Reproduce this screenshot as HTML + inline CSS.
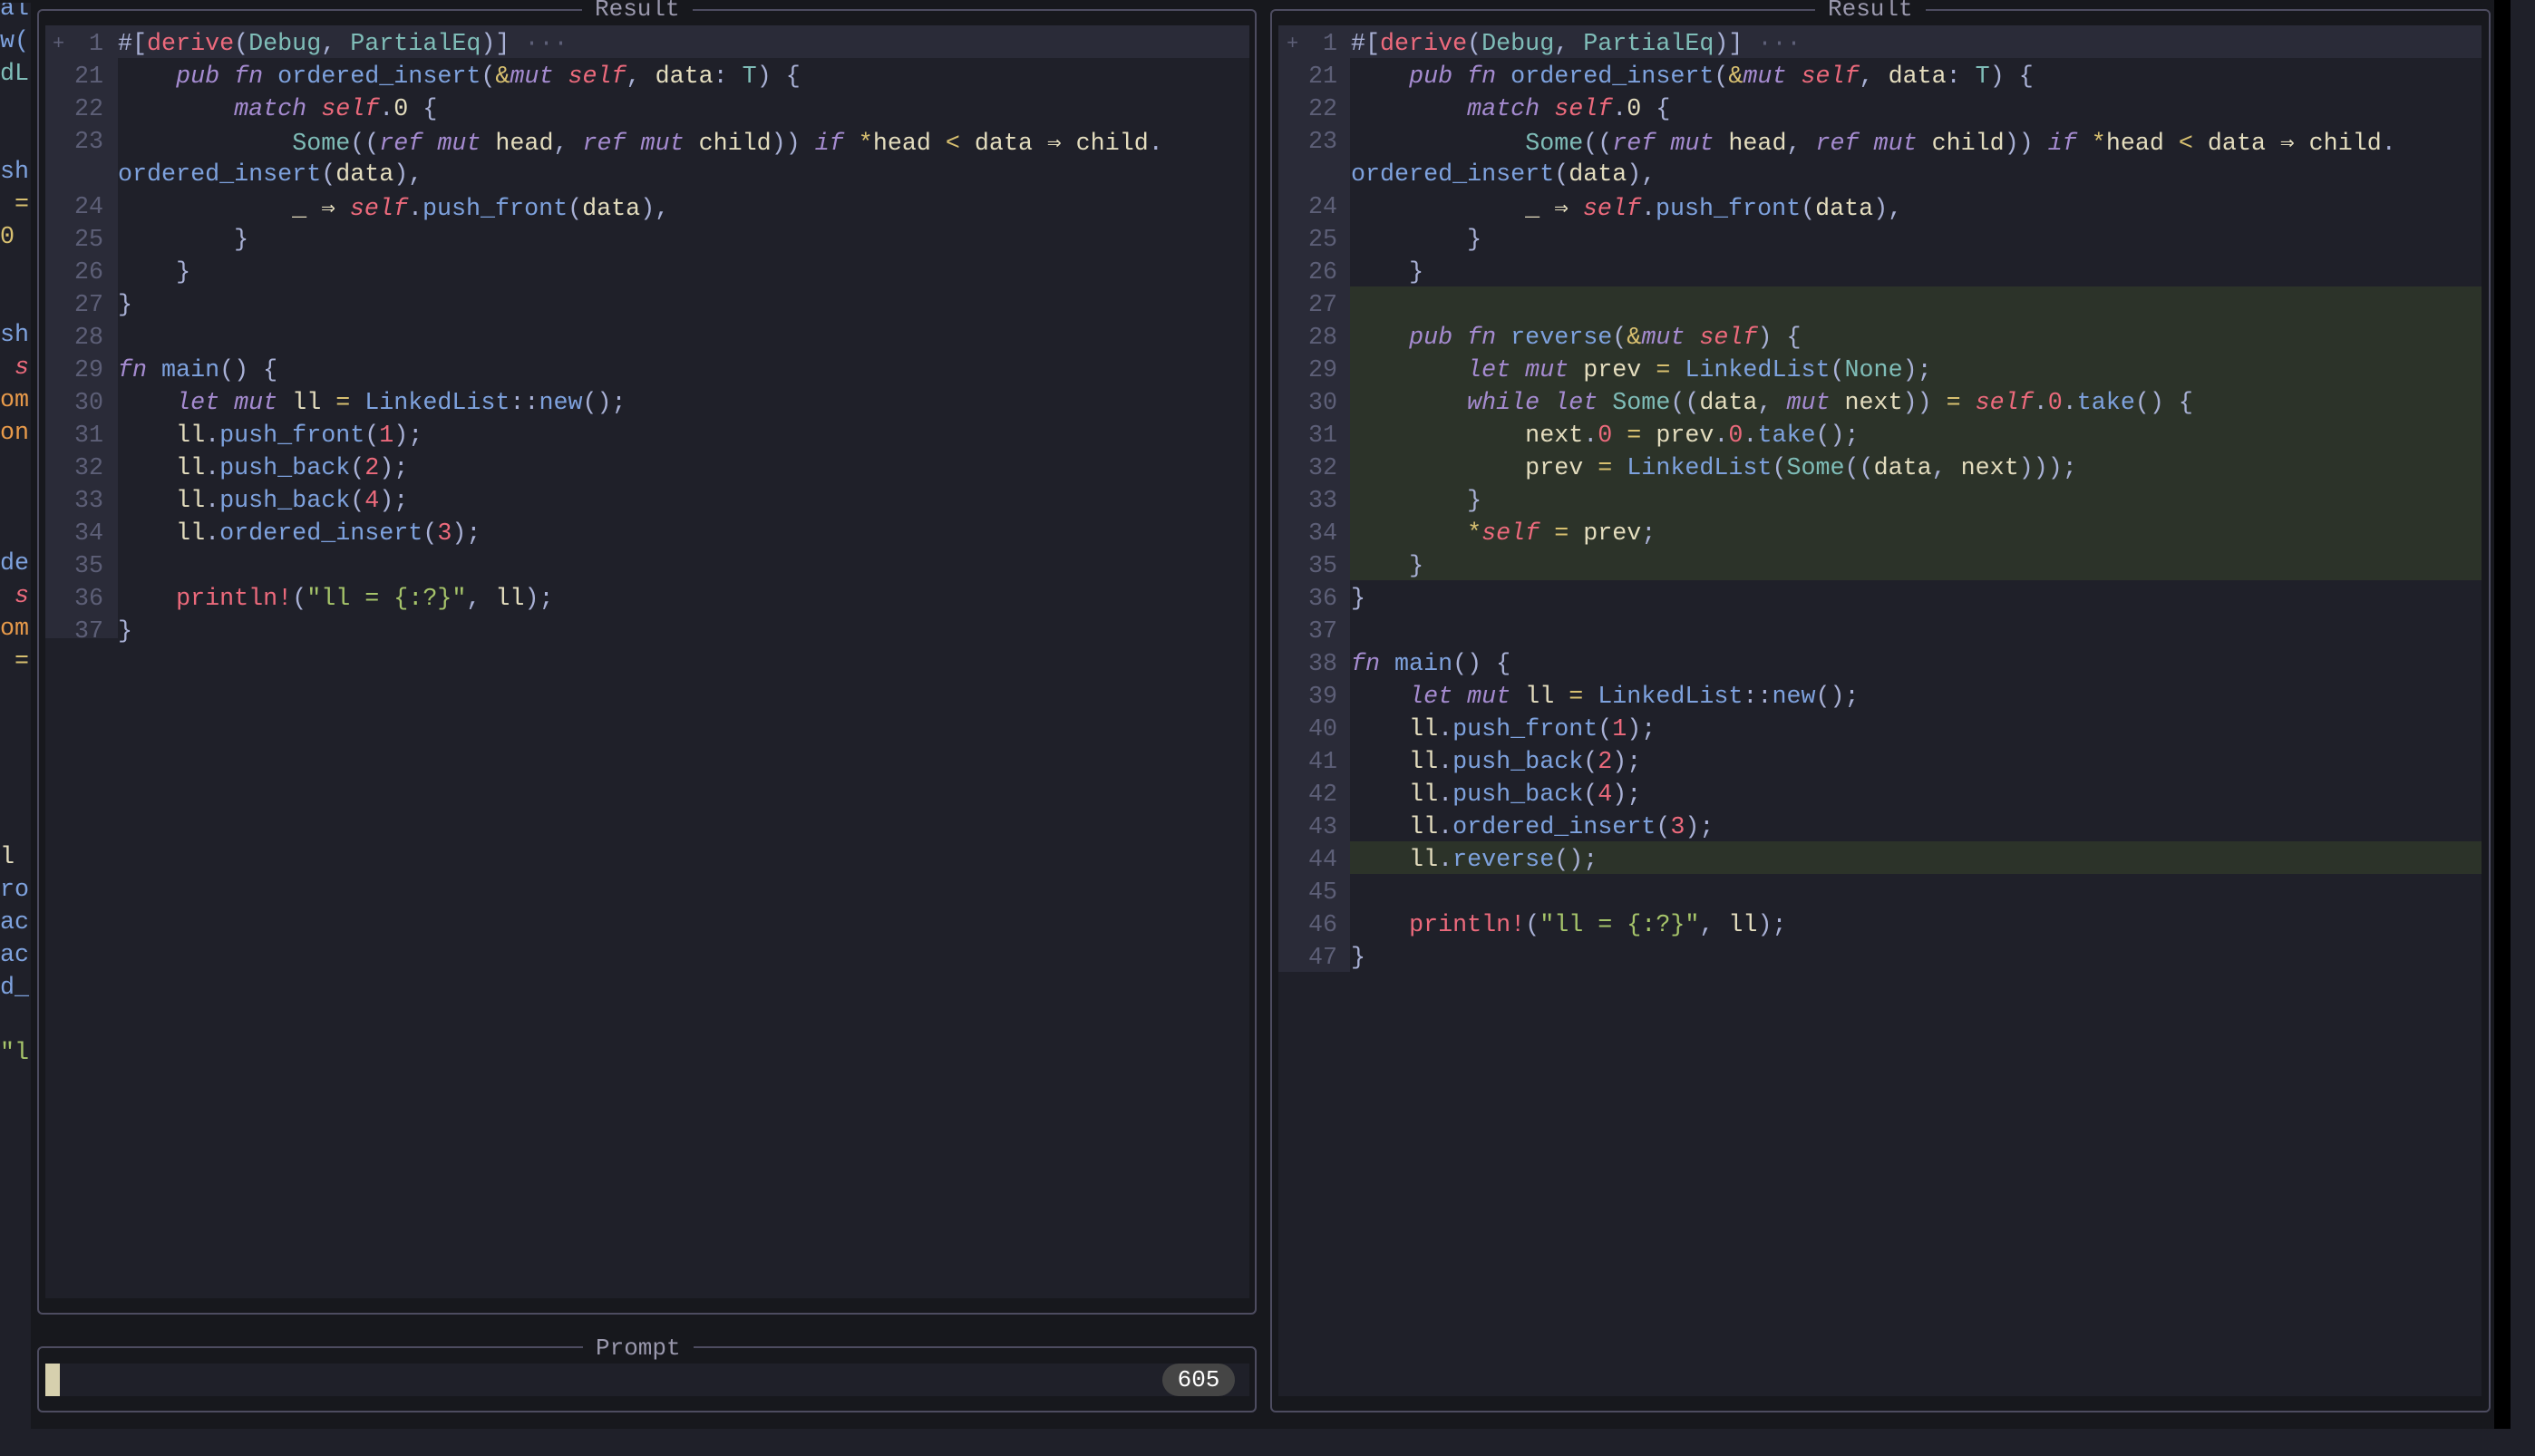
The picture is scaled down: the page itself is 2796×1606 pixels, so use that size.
<!DOCTYPE html>
<html><head><meta charset="utf-8"><style>
*{margin:0;padding:0;box-sizing:border-box}
body{width:2796px;height:1606px;background:#1f2029;position:relative;overflow:hidden;font-family:"Liberation Mono","DejaVu Sans Mono",monospace;font-size:26.7px}
.abs{position:absolute}
.row{position:absolute;height:36px;line-height:36px;white-space:pre;color:#e4ddbe}
.ln{position:absolute;height:36px;line-height:36px;text-align:right;color:#5d5f77;width:48px}
.k{color:#a58bd0;font-style:italic}.f{color:#7ea2de}.s{color:#ec6a7c;font-style:italic}.t{color:#7fbdb8}.n{color:#ec6a7c}.o{color:#d8c070}.p{color:#a9b1d6}.m{color:#ec6a7c}.g{color:#a6c46a}.c{color:#5d5f77}
.ar{color:#e4ddbe;font-family:"DejaVu Sans Mono",monospace;font-size:26px}
.title{position:absolute;color:#9a98ad;font-size:26px;line-height:26px;background:#17181d;padding:0 14px}
</style></head><body>
<div class="abs" style="left:0;top:0;width:2769px;height:1576px;background:#17181d"></div>
<div class="abs" style="left:0;top:3px;width:34px;height:1573px;background:#1f2029;overflow:hidden">
<div class="row f" style="top:-11px;left:0">al</div>
<div class="row f" style="top:25px;left:0">w(</div>
<div class="row t" style="top:61px;left:0">dL</div>
<div class="row f" style="top:169px;left:0">sh</div>
<div class="row o" style="top:205px;left:0"> =</div>
<div class="row o" style="top:241px;left:0">0</div>
<div class="row f" style="top:349px;left:0">sh</div>
<div class="row s" style="top:385px;left:0"> s</div>
<div class="row" style="top:421px;left:0;color:#e89a4a">om</div>
<div class="row" style="top:457px;left:0;color:#e89a4a">on</div>
<div class="row f" style="top:601px;left:0">de</div>
<div class="row s" style="top:637px;left:0"> s</div>
<div class="row" style="top:673px;left:0;color:#e89a4a">om</div>
<div class="row o" style="top:709px;left:0"> =</div>
<div class="row" style="top:925px;left:0">l</div>
<div class="row f" style="top:961px;left:0">ro</div>
<div class="row f" style="top:997px;left:0">ac</div>
<div class="row f" style="top:1033px;left:0">ac</div>
<div class="row f" style="top:1069px;left:0">d_</div>
<div class="row g" style="top:1141px;left:0">"l</div>
</div>
<div class="abs" style="left:2751px;top:0;width:18px;height:1576px;background:#000"></div>

<!-- left panel -->
<div class="abs" style="left:41px;top:10px;width:1345px;height:1440px;border:2px solid #4d4c60;border-radius:6px"></div>
<div class="title" style="left:642px;top:-3px">Result</div>
<div class="abs" style="left:50px;top:28px;width:1328px;height:1404px;background:#1f2029"></div>
<div class="abs" style="left:50px;top:28px;width:80px;height:676px;background:#2a2b38"></div>
<div class="abs" style="left:50px;top:28px;width:1328px;height:36px;background:#2a2b38"></div>

<!-- prompt -->
<div class="abs" style="left:41px;top:1485px;width:1345px;height:73px;border:2px solid #4d4c60;border-radius:6px"></div>
<div class="title" style="left:643px;top:1474px">Prompt</div>
<div class="abs" style="left:50px;top:1504px;width:1328px;height:36px;background:#1f2029"></div>
<div class="abs" style="left:50px;top:1504px;width:16px;height:36px;background:#d6d0ae"></div>
<div class="abs" style="left:1282px;top:1504px;width:80px;height:36px;background:#454545;border-radius:18px;color:#fff;text-align:center;line-height:36px;font-size:26px">605</div>

<!-- right panel -->
<div class="abs" style="left:1401px;top:10px;width:1346px;height:1548px;border:2px solid #4d4c60;border-radius:6px"></div>
<div class="title" style="left:2002px;top:-3px">Result</div>
<div class="abs" style="left:1410px;top:28px;width:1327px;height:1512px;background:#1f2029"></div>
<div class="abs" style="left:1410px;top:28px;width:79px;height:1044px;background:#2a2b38"></div>
<div class="abs" style="left:1410px;top:28px;width:1327px;height:36px;background:#2a2b38"></div>
<div class="abs" style="left:1489px;top:316px;width:1248px;height:324px;background:#2c3329"></div>
<div class="abs" style="left:1489px;top:928px;width:1248px;height:36px;background:#2c3329"></div>

<div id="L"></div>
<script>
const A='<span class="ar">⇒</span>';
const H={
h:'<span class="p">#[</span><span class="m">derive</span><span class="p">(</span><span class="t">Debug</span><span class="p">, </span><span class="t">PartialEq</span><span class="p">)]</span> <span class="c">···</span>',
oi:'    <span class="k">pub fn</span> <span class="f">ordered_insert</span><span class="p">(</span><span class="o">&amp;</span><span class="k">mut</span> <span class="s">self</span><span class="p">,</span> data<span class="p">:</span> <span class="t">T</span><span class="p">)</span> <span class="p">{</span>',
ma:'        <span class="k">match</span> <span class="s">self</span><span class="p">.</span>0 <span class="p">{</span>',
so:'            <span class="t">Some</span><span class="p">((</span><span class="k">ref mut</span> head<span class="p">,</span> <span class="k">ref mut</span> child<span class="p">))</span> <span class="k">if</span> <span class="o">*</span>head <span class="o">&lt;</span> data '+A+' child<span class="p">.</span>',
wr:'<span class="f">ordered_insert</span><span class="p">(</span>data<span class="p">),</span>',
us:'            _ '+A+' <span class="s">self</span><span class="p">.</span><span class="f">push_front</span><span class="p">(</span>data<span class="p">),</span>',
c8:'        <span class="p">}</span>',c4:'    <span class="p">}</span>',c0:'<span class="p">}</span>',e:'',
mn:'<span class="k">fn</span> <span class="f">main</span><span class="p">()</span> <span class="p">{</span>',
lt:'    <span class="k">let mut</span> ll <span class="o">=</span> <span class="f">LinkedList</span><span class="p">::</span><span class="f">new</span><span class="p">();</span>',
p1:'    ll<span class="p">.</span><span class="f">push_front</span><span class="p">(</span><span class="n">1</span><span class="p">);</span>',
p2:'    ll<span class="p">.</span><span class="f">push_back</span><span class="p">(</span><span class="n">2</span><span class="p">);</span>',
p4:'    ll<span class="p">.</span><span class="f">push_back</span><span class="p">(</span><span class="n">4</span><span class="p">);</span>',
p3:'    ll<span class="p">.</span><span class="f">ordered_insert</span><span class="p">(</span><span class="n">3</span><span class="p">);</span>',
rv:'    ll<span class="p">.</span><span class="f">reverse</span><span class="p">();</span>',
pr:'    <span class="m">println!</span><span class="p">(</span><span class="g">"ll = {:?}"</span><span class="p">,</span> ll<span class="p">);</span>',
r1:'    <span class="k">pub fn</span> <span class="f">reverse</span><span class="p">(</span><span class="o">&amp;</span><span class="k">mut</span> <span class="s">self</span><span class="p">)</span> <span class="p">{</span>',
r2:'        <span class="k">let mut</span> prev <span class="o">=</span> <span class="f">LinkedList</span><span class="p">(</span><span class="t">None</span><span class="p">);</span>',
r3:'        <span class="k">while let</span> <span class="t">Some</span><span class="p">((</span>data<span class="p">,</span> <span class="k">mut</span> next<span class="p">))</span> <span class="o">=</span> <span class="s">self</span><span class="p">.</span><span class="n">0</span><span class="p">.</span><span class="f">take</span><span class="p">()</span> <span class="p">{</span>',
r4:'            next<span class="p">.</span><span class="n">0</span> <span class="o">=</span> prev<span class="p">.</span><span class="n">0</span><span class="p">.</span><span class="f">take</span><span class="p">();</span>',
r5:'            prev <span class="o">=</span> <span class="f">LinkedList</span><span class="p">(</span><span class="t">Some</span><span class="p">((</span>data<span class="p">,</span> next<span class="p">)));</span>',
r6:'        <span class="p">}</span>',
r7:'        <span class="o">*</span><span class="s">self</span> <span class="o">=</span> prev<span class="p">;</span>'
};
function build(rows,gx,tx){let s='';rows.forEach((r,i)=>{const y=31+36*i;
if(r[0]!==''){s+='<div class="ln" style="left:'+(gx)+'px;top:'+y+'px">'+r[0]+'</div>';}
if(i===0)s+='<div class="row c" style="left:'+(gx-8)+'px;top:'+y+'px;font-size:22px">+</div>';
s+='<div class="row" style="left:'+tx+'px;top:'+y+'px">'+H[r[1]]+'</div>';});return s;}
const L=[[1,'h'],[21,'oi'],[22,'ma'],[23,'so'],['','wr'],[24,'us'],[25,'c8'],[26,'c4'],[27,'c0'],[28,'e'],[29,'mn'],[30,'lt'],[31,'p1'],[32,'p2'],[33,'p4'],[34,'p3'],[35,'e'],[36,'pr'],[37,'c0']];
const R=[[1,'h'],[21,'oi'],[22,'ma'],[23,'so'],['','wr'],[24,'us'],[25,'c8'],[26,'c4'],[27,'e'],[28,'r1'],[29,'r2'],[30,'r3'],[31,'r4'],[32,'r5'],[33,'r6'],[34,'r7'],[35,'c4'],[36,'c0'],[37,'e'],[38,'mn'],[39,'lt'],[40,'p1'],[41,'p2'],[42,'p4'],[43,'p3'],[44,'rv'],[45,'e'],[46,'pr'],[47,'c0']];
document.getElementById('L').outerHTML=build(L,66,130)+build(R,1427,1490);
</script>
</body></html>
